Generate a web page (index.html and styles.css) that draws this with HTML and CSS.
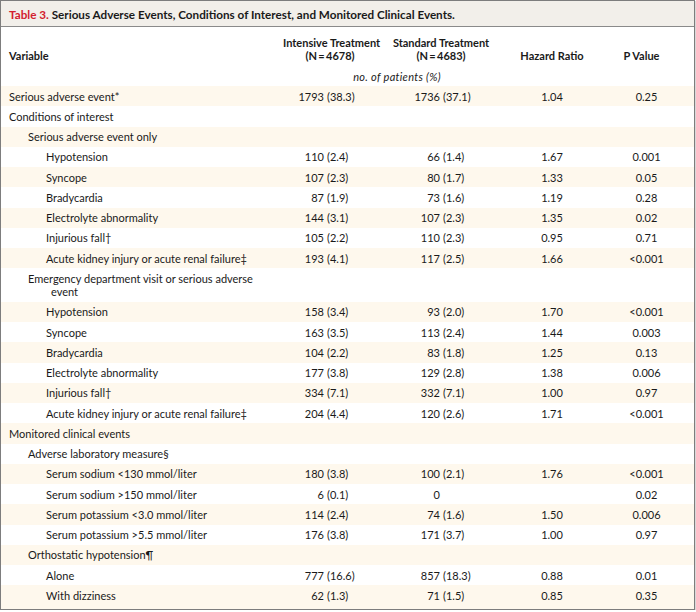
FILE: index.html
```html
<!DOCTYPE html>
<html lang="en">
<head>
<meta charset="utf-8">
<title>Table 3</title>
<link rel="stylesheet" href="styles.css">
</head>
<body>
<div class="frame">
  <div class="title"><span class="num">Table 3.</span> Serious Adverse Events, Conditions of Interest, and Monitored Clinical Events.</div>
  <table class="data">
    <colgroup>
      <col class="c-var">
      <col class="c-int">
      <col class="c-std">
      <col class="c-hr">
      <col class="c-p">
    </colgroup>
    <thead>
      <tr class="h1">
        <th class="var">Variable</th>
        <th>Intensive Treatment<br>(N&#8201;=&#8201;4678)</th>
        <th>Standard Treatment<br>(N&#8201;=&#8201;4683)</th>
        <th>Hazard Ratio</th>
        <th class="pv">P Value</th>
      </tr>
      <tr class="h2">
        <th></th>
        <th colspan="2" class="unit">no. of patients (%)</th>
        <th></th>
        <th></th>
      </tr>
    </thead>
    <tbody>
      <tr><td class="lab l0">Serious adverse event*</td><td class="n1"><span class="n">1793</span><span class="p">(38.3)</span></td><td class="n2"><span class="n">1736</span><span class="p">(37.1)</span></td><td class="c">1.04</td><td class="c">0.25</td></tr>
      <tr><td class="lab l0">Conditions of interest</td><td></td><td></td><td></td><td></td></tr>
      <tr><td class="lab l1">Serious adverse event only</td><td></td><td></td><td></td><td></td></tr>
      <tr><td class="lab l2">Hypotension</td><td class="n1"><span class="n">110</span><span class="p">(2.4)</span></td><td class="n2"><span class="n">66</span><span class="p">(1.4)</span></td><td class="c">1.67</td><td class="c">0.001</td></tr>
      <tr><td class="lab l2">Syncope</td><td class="n1"><span class="n">107</span><span class="p">(2.3)</span></td><td class="n2"><span class="n">80</span><span class="p">(1.7)</span></td><td class="c">1.33</td><td class="c">0.05</td></tr>
      <tr><td class="lab l2">Bradycardia</td><td class="n1"><span class="n">87</span><span class="p">(1.9)</span></td><td class="n2"><span class="n">73</span><span class="p">(1.6)</span></td><td class="c">1.19</td><td class="c">0.28</td></tr>
      <tr><td class="lab l2">Electrolyte abnormality</td><td class="n1"><span class="n">144</span><span class="p">(3.1)</span></td><td class="n2"><span class="n">107</span><span class="p">(2.3)</span></td><td class="c">1.35</td><td class="c">0.02</td></tr>
      <tr><td class="lab l2">Injurious fall†</td><td class="n1"><span class="n">105</span><span class="p">(2.2)</span></td><td class="n2"><span class="n">110</span><span class="p">(2.3)</span></td><td class="c">0.95</td><td class="c">0.71</td></tr>
      <tr><td class="lab l2">Acute kidney injury or acute renal failure‡</td><td class="n1"><span class="n">193</span><span class="p">(4.1)</span></td><td class="n2"><span class="n">117</span><span class="p">(2.5)</span></td><td class="c">1.66</td><td class="c">&lt;0.001</td></tr>
      <tr><td class="lab l1">Emergency department visit or serious adverse event</td><td></td><td></td><td></td><td></td></tr>
      <tr><td class="lab l2">Hypotension</td><td class="n1"><span class="n">158</span><span class="p">(3.4)</span></td><td class="n2"><span class="n">93</span><span class="p">(2.0)</span></td><td class="c">1.70</td><td class="c">&lt;0.001</td></tr>
      <tr><td class="lab l2">Syncope</td><td class="n1"><span class="n">163</span><span class="p">(3.5)</span></td><td class="n2"><span class="n">113</span><span class="p">(2.4)</span></td><td class="c">1.44</td><td class="c">0.003</td></tr>
      <tr><td class="lab l2">Bradycardia</td><td class="n1"><span class="n">104</span><span class="p">(2.2)</span></td><td class="n2"><span class="n">83</span><span class="p">(1.8)</span></td><td class="c">1.25</td><td class="c">0.13</td></tr>
      <tr><td class="lab l2">Electrolyte abnormality</td><td class="n1"><span class="n">177</span><span class="p">(3.8)</span></td><td class="n2"><span class="n">129</span><span class="p">(2.8)</span></td><td class="c">1.38</td><td class="c">0.006</td></tr>
      <tr><td class="lab l2">Injurious fall†</td><td class="n1"><span class="n">334</span><span class="p">(7.1)</span></td><td class="n2"><span class="n">332</span><span class="p">(7.1)</span></td><td class="c">1.00</td><td class="c">0.97</td></tr>
      <tr><td class="lab l2">Acute kidney injury or acute renal failure‡</td><td class="n1"><span class="n">204</span><span class="p">(4.4)</span></td><td class="n2"><span class="n">120</span><span class="p">(2.6)</span></td><td class="c">1.71</td><td class="c">&lt;0.001</td></tr>
      <tr><td class="lab l0">Monitored clinical events</td><td></td><td></td><td></td><td></td></tr>
      <tr><td class="lab l1">Adverse laboratory measure§</td><td></td><td></td><td></td><td></td></tr>
      <tr><td class="lab l2">Serum sodium &lt;130 mmol/liter</td><td class="n1"><span class="n">180</span><span class="p">(3.8)</span></td><td class="n2"><span class="n">100</span><span class="p">(2.1)</span></td><td class="c">1.76</td><td class="c">&lt;0.001</td></tr>
      <tr><td class="lab l2">Serum sodium &gt;150 mmol/liter</td><td class="n1"><span class="n">6</span><span class="p">(0.1)</span></td><td class="n2"><span class="n">0</span></td><td class="c"></td><td class="c">0.02</td></tr>
      <tr><td class="lab l2">Serum potassium &lt;3.0 mmol/liter</td><td class="n1"><span class="n">114</span><span class="p">(2.4)</span></td><td class="n2"><span class="n">74</span><span class="p">(1.6)</span></td><td class="c">1.50</td><td class="c">0.006</td></tr>
      <tr><td class="lab l2">Serum potassium &gt;5.5 mmol/liter</td><td class="n1"><span class="n">176</span><span class="p">(3.8)</span></td><td class="n2"><span class="n">171</span><span class="p">(3.7)</span></td><td class="c">1.00</td><td class="c">0.97</td></tr>
      <tr><td class="lab l1">Orthostatic hypotension¶</td><td></td><td></td><td></td><td></td></tr>
      <tr><td class="lab l2">Alone</td><td class="n1"><span class="n">777</span><span class="p">(16.6)</span></td><td class="n2"><span class="n">857</span><span class="p">(18.3)</span></td><td class="c">0.88</td><td class="c">0.01</td></tr>
      <tr class="last"><td class="lab l2">With dizziness</td><td class="n1"><span class="n">62</span><span class="p">(1.3)</span></td><td class="n2"><span class="n">71</span><span class="p">(1.5)</span></td><td class="c">0.85</td><td class="c">0.35</td></tr>
    </tbody>
  </table>
</div>
</body>
</html>
```

FILE: styles.css
```css
html, body {
  margin: 0;
  padding: 0;
  background: #ffffff;
}

body {
  font-family: "Lato", "Open Sans", "Liberation Sans", sans-serif;
  font-size: 11px;
  color: #1a1a1a;
}

.frame {
  width: 693px;
  border: 1px solid #7d7d7d;
  box-shadow: 1px 1px 0 #d9d9d9;
  background: #ffffff;
}

.title {
  height: 25px;
  line-height: 26px;
  padding-left: 8px;
  background: #f2efea;
  border-bottom: 1px solid #8a8a8a;
  font-size: 11.7px;
  font-weight: 700;
  color: #1a1a1a;
  white-space: nowrap;
}

.title .num {
  color: #d2202f;
}

.data {
  width: 693px;
  table-layout: fixed;
  border-collapse: collapse;
  border-spacing: 0;
}

.c-var { width: 282px; }
.c-int { width: 94px; }
.c-std { width: 128px; }
.c-hr { width: 94px; }
.c-p { width: 95px; }

.data th {
  font-weight: 700;
  text-align: center;
  vertical-align: bottom;
  line-height: 13px;
  padding: 0;
  white-space: nowrap;
}

.h1 th {
  padding-top: 9px;
  padding-bottom: 4px;
}

.h1 th.var {
  text-align: left;
  padding-left: 8px;
}

.h1 th.pv {
  padding-right: 10px;
}

.h2 th {
  padding-top: 4px;
  padding-bottom: 3px;
}

.h2 th.unit {
  font-weight: 400;
  font-style: italic;
  letter-spacing: 0.3px;
  padding-left: 6px;
}

.data td {
  padding: 3.5px 0;
  line-height: 13.25px;
  vertical-align: top;
  white-space: nowrap;
}

.data tbody tr:nth-child(odd) {
  background: #fef8ed;
}

.data td.lab {
  white-space: normal;
  padding-right: 5px;
}

.data td.l0 { padding-left: 8px; }
.data td.l1 { padding-left: 50px; text-indent: -23px; }
.data td.l2 { padding-left: 68px; text-indent: -23px; }

.n {
  display: inline-block;
  text-align: right;
  text-indent: 0;
}

.p {
  display: inline-block;
  margin-left: 3px;
}

.n1 .n { width: 41px; }
.n2 .n { width: 63px; }

.data td.c {
  text-align: center;
}

.data tr.last td {
  padding-bottom: 7px;
}
```
